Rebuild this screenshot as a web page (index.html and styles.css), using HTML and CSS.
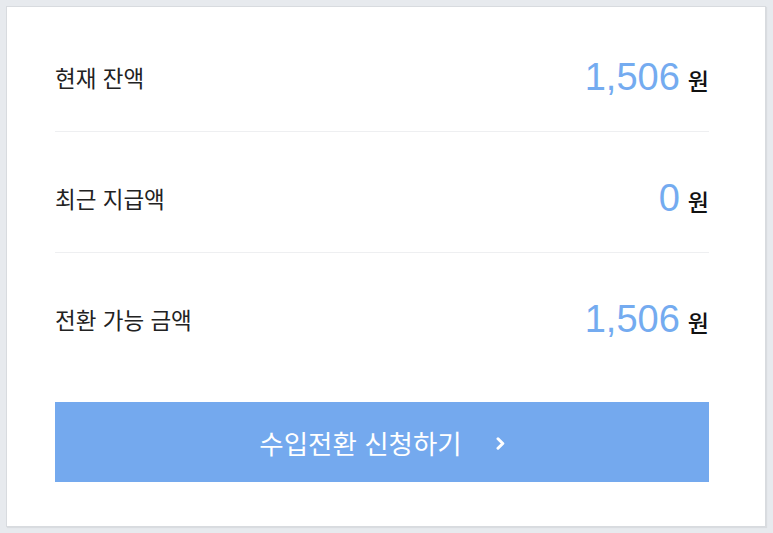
FILE: index.html
```html
<!DOCTYPE html>
<html lang="ko">
<head>
<meta charset="utf-8">
<link rel="stylesheet" href="styles.css">
</head>
<body>
<div class="card">
  <div class="row">
    <span class="label">현재 잔액</span>
    <span class="value"><span class="num">1,506</span><span class="unit">원</span></span>
  </div>
  <div class="row">
    <span class="label">최근 지급액</span>
    <span class="value"><span class="num">0</span><span class="unit">원</span></span>
  </div>
  <div class="row last">
    <span class="label">전환 가능 금액</span>
    <span class="value"><span class="num">1,506</span><span class="unit">원</span></span>
  </div>
  <button class="cta" type="button">
    <span class="cta-text">수입전환 신청하기</span>
    <svg class="chev" width="9" height="13" viewBox="0 0 9 13"><path d="M2 1.8 L6.8 6.5 L2 11.2" fill="none" stroke="#fff" stroke-width="3" stroke-linecap="round" stroke-linejoin="round"/></svg>
  </button>
</div>
</body>
</html>
```
FILE: styles.css
```css
html, body {
  margin: 0;
  height: 100%;
}
body {
  background: #e7eaee;
  padding: 6px 7px 6px 6px;
  box-sizing: border-box;
  font-family: "Noto Sans CJK KR", "Noto Sans", sans-serif;
}
.card {
  background: #fff;
  border: 1px solid #d8dbdf;
  box-shadow: 1px 1px 1px rgba(0,0,0,0.06);
  height: 100%;
  box-sizing: border-box;
  padding: 4px 56px 0 48px;
  display: flex;
  flex-direction: column;
}
.row {
  height: 121px;
  box-sizing: border-box;
  padding-top: 12px;
  border-bottom: 1px solid #eeeff1;
  display: flex;
  align-items: center;
  justify-content: space-between;
}
.row.last {
  border-bottom: none;
  height: 120px;
}
.label {
  font-size: 22.5px;
  color: #222;
}
.value {
  display: flex;
  align-items: baseline;
  gap: 8px;
}
.num {
  font-family: "Liberation Sans", Arial, sans-serif;
  font-weight: 400;
  font-size: 38px;
  color: #74abf0;
  line-height: 1;
}
.unit {
  font-size: 23px;
  font-weight: 500;
  color: #111;
}
.cta {
  margin-top: 29px;
  height: 80px;
  width: 100%;
  border: none;
  background: #74a9ee;
  color: #fff;
  font-family: "Noto Sans CJK KR", "Noto Sans", sans-serif;
  font-size: 26.5px;
  display: flex;
  align-items: center;
  justify-content: center;
  gap: 34px;
  padding: 0;
  cursor: pointer;
}
.chev {
  display: block;
  margin-top: 2px;
}
```
